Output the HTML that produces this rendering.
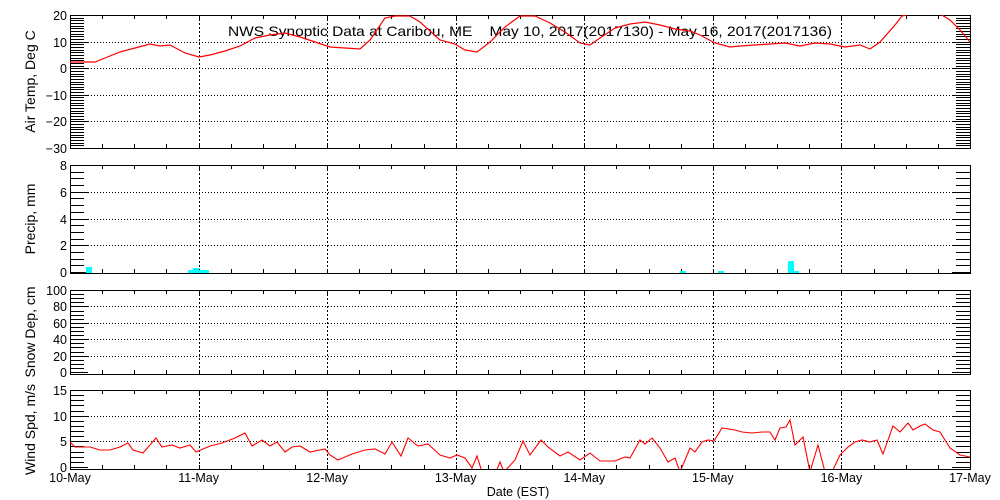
<!DOCTYPE html>
<html><head><meta charset="utf-8"><style>
html,body{margin:0;padding:0;background:#fff;width:1000px;height:500px;overflow:hidden}
svg{display:block}
text{font-family:"Liberation Sans",sans-serif;fill:#000}
</style></head><body>
<svg id="s" width="1000" height="500" xmlns="http://www.w3.org/2000/svg" shape-rendering="crispEdges">
<defs>
<clipPath id="c1"><rect x="70" y="15" width="900" height="133"/></clipPath>
<clipPath id="c4"><rect x="70" y="390" width="900" height="79"/></clipPath>
</defs>
<text x="530" y="36" font-size="14" text-anchor="middle" textLength="604" lengthAdjust="spacingAndGlyphs">NWS Synoptic Data at Caribou, ME&#160;&#160;&#160;&#160;May 10, 2017(2017130) - May 16, 2017(2017136)</text>
</svg>
<script>
const s=document.getElementById('s');const NS='http://www.w3.org/2000/svg';
function el(t,a,txt){const e=document.createElementNS(NS,t);for(const k in a)e.setAttribute(k,a[k]);if(txt!==undefined)e.textContent=txt;s.appendChild(e);return e;}
const L=70,R=970,DW=900/7;
const panels=[
 {top:15,bot:148,v0:20,v1:-30,y0:15,y1:148,maj:10,min:1,label:'Air Temp, Deg C'},
 {top:165,bot:273,v0:8,v1:0,y0:165,y1:272,maj:2,min:0.5,label:'Precip, mm'},
 {top:290,bot:374,v0:100,v1:0,y0:290,y1:372,maj:20,min:5,label:'Snow Dep, cm'},
 {top:390,bot:469,v0:15,v1:0,y0:390,y1:467,maj:5,min:1,label:'Wind Spd, m/s'}
];
panels.forEach(p=>{
 const Y=v=>p.y0+(p.v0-v)*(p.y1-p.y0)/(p.v0-p.v1);
 for(let d=1;d<7;d++){const x=Math.round(L+d*DW)+0.5;el('line',{x1:x,x2:x,y1:p.top,y2:p.bot,stroke:'#000','stroke-dasharray':'2 2'});}
 for(let q=1;q<28;q++){const x=Math.round(L+q*DW/4)+0.5;el('line',{x1:x,x2:x,y1:p.bot,y2:p.bot-4,stroke:'#000'});el('line',{x1:x,x2:x,y1:p.top,y2:p.top+4,stroke:'#000'});}
 const lo=Math.min(p.v0,p.v1),hi=Math.max(p.v0,p.v1);
 for(let v=lo;v<=hi+1e-6;v+=p.min){const y=Math.round(Y(v))+0.5;
  el('line',{x1:L,x2:L+14,y1:y,y2:y,stroke:'#000'});el('line',{x1:R-14,x2:R,y1:y,y2:y,stroke:'#000'});}
 for(let v=lo;v<=hi+1e-6;v+=p.maj){const y=Math.round(Y(v))+0.5;
  if(v!==lo&&v!==hi){el('line',{x1:L,x2:R,y1:y,y2:y,stroke:'#000','stroke-dasharray':'1 2'});}
  el('line',{x1:L,x2:L+18,y1:y,y2:y,stroke:'#000'});el('line',{x1:R-18,x2:R,y1:y,y2:y,stroke:'#000'});
  el('text',{x:67,y:y+4.5,'font-size':12.5,'text-anchor':'end'},String(v).replace('-','\u2212'));}
 el('rect',{x:L+0.5,y:p.top+0.5,width:R-L,height:p.bot-p.top,fill:'none',stroke:'#000'});
 const cy=(p.top+p.bot)/2;
 el('text',{x:0,y:0,'font-size':14,'text-anchor':'middle',transform:`translate(35,${cy}) rotate(-90)`},p.label);
});
['10-May','11-May','12-May','13-May','14-May','15-May','16-May','17-May'].forEach((t,i)=>el('text',{x:L+i*DW,y:482,'font-size':12.5,'text-anchor':'middle'},t));
el('text',{x:518,y:496,'font-size':12.5,'text-anchor':'middle'},'Date (EST)');
[[86,92,267],[188,193,270],[193,199,268],[199,209,270],[680,686,271],[718,724,271],[788,794,261],[794,799,271]].forEach(b=>el('rect',{x:b[0],y:b[2],width:b[1]-b[0],height:273-b[2],fill:'#00ffff'}));
const temp=[[70,62],[95,62],[105,58],[120,52],[135,48],[150,44],[160,46],[170,45],[185,53],[199,57],[210,55],[225,51],[240,46],[255,38],[270,35],[285,33],[300,37],[315,42],[330,47],[345,48],[360,49],[370,40],[385,18],[395,16],[410,16],[420,22],[440,40],[455,44],[465,50],[477,52],[490,42],[505,27],[520,16],[535,16],[550,23],[565,32],[580,43],[590,45],[600,38],[615,28],[630,24],[645,22],[660,25],[675,29],[690,31],[700,35],[715,43],[730,47],[740,46],[755,45],[770,44],[785,43],[800,46],[815,43],[830,44],[845,47],[860,45],[870,49],[880,42],[895,25],[902,16],[910,14],[915,12],[935,12],[940,14],[950,20],[960,30],[970,42]];
el('polyline',{points:temp.map(p=>p.join(',')).join(' '),fill:'none',stroke:'#ff0000','shape-rendering':'auto','stroke-width':1.2,'clip-path':'url(#c1)'});
const wind=[[70,442],[75,447],[90,447],[100,450],[110,450],[120,447],[128,443],[133,450],[143,453],[156,438],[162,447],[172,445],[180,448],[190,445],[196,452],[210,446],[222,443],[235,438],[245,433],[252,446],[262,440],[270,446],[277,442],[285,452],[292,447],[300,446],[310,452],[325,449],[330,455],[338,460],[352,454],[365,450],[375,449],[385,454],[392,442],[401,456],[408,438],[418,446],[428,444],[440,455],[450,458],[457,455],[465,458],[472,468],[477,456],[482,472],[496,472],[500,462],[504,472],[515,460],[523,441],[530,455],[541,440],[548,447],[560,456],[568,452],[580,460],[590,453],[600,461],[615,461],[625,457],[630,458],[640,440],[645,444],[652,438],[660,448],[668,462],[675,458],[680,472],[690,448],[695,452],[702,442],[708,440],[714,441],[722,428],[735,430],[742,432],[752,433],[762,432],[770,432],[775,440],[780,428],[786,427],[790,420],[795,445],[803,437],[810,472],[818,445],[825,472],[832,472],[840,455],[848,447],[855,442],[862,440],[870,442],[877,440],[883,454],[893,426],[900,432],[908,423],[913,430],[920,426],[925,424],[933,430],[940,432],[950,448],[960,455],[970,457]];
el('polyline',{points:wind.map(p=>p.join(',')).join(' '),fill:'none',stroke:'#ff0000','shape-rendering':'auto','stroke-width':1.1,'clip-path':'url(#c4)'});
</script>
</body></html>
